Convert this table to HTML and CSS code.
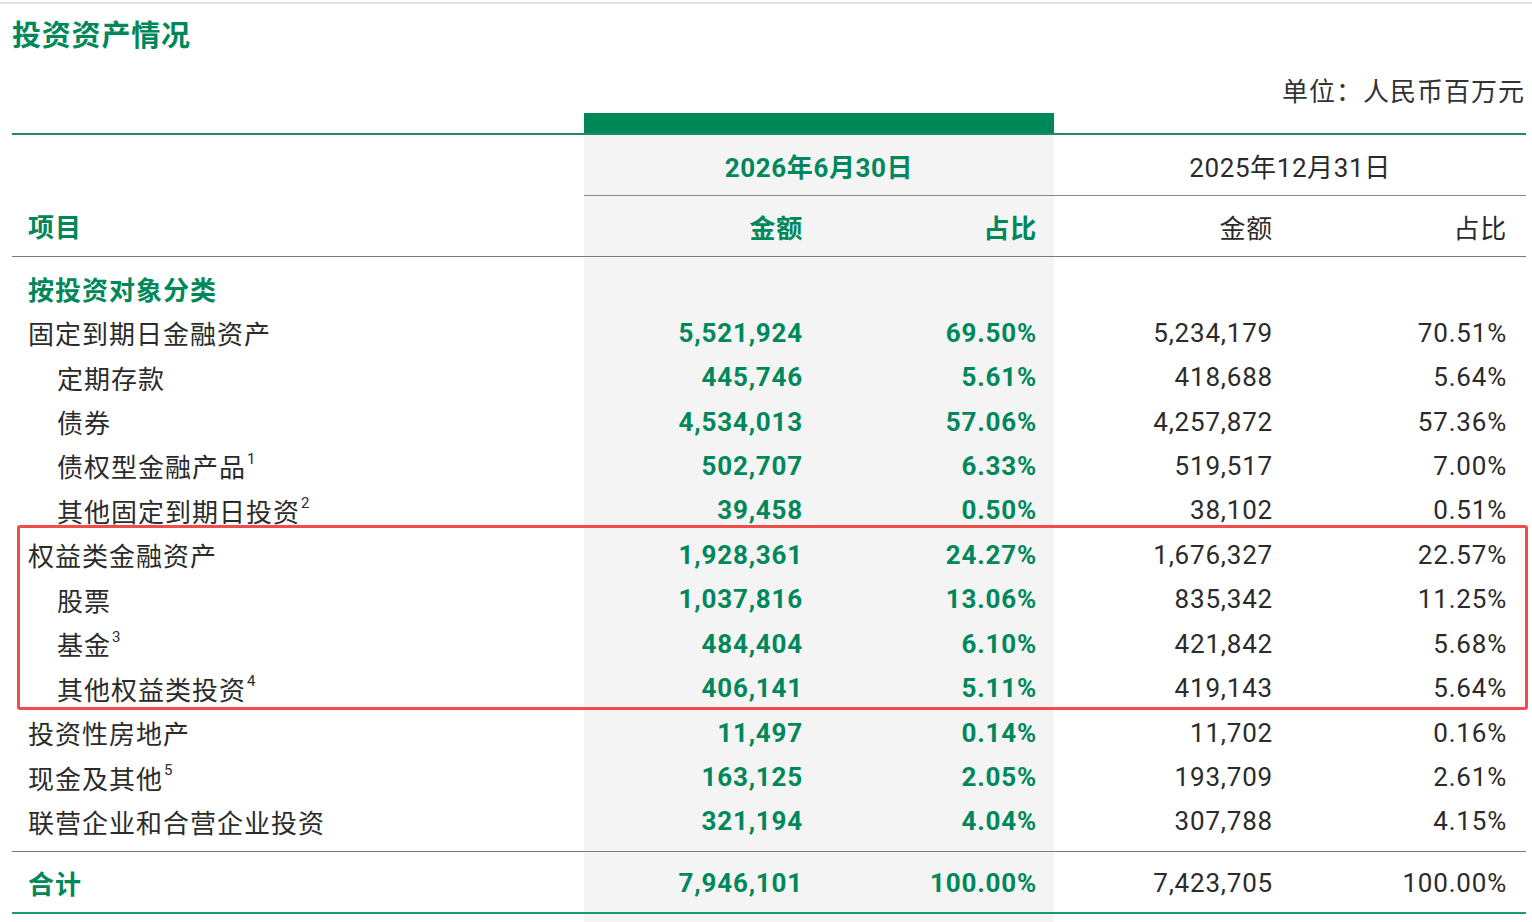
FILE: index.html
```html
<!DOCTYPE html>
<html lang="zh-CN">
<head>
<meta charset="utf-8">
<title>投资资产情况</title>
<link rel="stylesheet" href="styles.css">
</head>
<body>
<div class="page">
  <div class="topline"></div>
  <h1 class="title">投资资产情况</h1>
  <div class="unit">单位：人民币百万元</div>

  <div class="bar-row">
    <div></div>
    <div class="bar"></div>
  </div>

  <div class="table">
    <div class="row date-row">
      <div class="cell"></div>
      <div class="cell span2 date cur">2026年6月30日</div>
      <div class="cell span2 date">2025年12月31日</div>
    </div>
    <div class="row head-row">
      <div class="cell label head-label">项目</div>
      <div class="cell num c2 bold line">金额</div>
      <div class="cell num c3 bold line">占比</div>
      <div class="cell num c4 line">金额</div>
      <div class="cell num c5 line">占比</div>
    </div>

    <div class="body">
      <div class="row data">
        <div class="cell label section">按投资对象分类</div>
        <div class="cell"></div><div class="cell"></div><div class="cell"></div><div class="cell"></div>
      </div>
      <div class="row data">
        <div class="cell label">固定到期日金融资产</div>
        <div class="cell num c2 bold">5,521,924</div>
        <div class="cell num c3 bold">69.50%</div>
        <div class="cell num c4">5,234,179</div>
        <div class="cell num c5">70.51%</div>
      </div>
      <div class="row data">
        <div class="cell label sub">定期存款</div>
        <div class="cell num c2 bold">445,746</div>
        <div class="cell num c3 bold">5.61%</div>
        <div class="cell num c4">418,688</div>
        <div class="cell num c5">5.64%</div>
      </div>
      <div class="row data">
        <div class="cell label sub">债券</div>
        <div class="cell num c2 bold">4,534,013</div>
        <div class="cell num c3 bold">57.06%</div>
        <div class="cell num c4">4,257,872</div>
        <div class="cell num c5">57.36%</div>
      </div>
      <div class="row data">
        <div class="cell label sub">债权型金融产品<sup>1</sup></div>
        <div class="cell num c2 bold">502,707</div>
        <div class="cell num c3 bold">6.33%</div>
        <div class="cell num c4">519,517</div>
        <div class="cell num c5">7.00%</div>
      </div>
      <div class="row data">
        <div class="cell label sub">其他固定到期日投资<sup>2</sup></div>
        <div class="cell num c2 bold">39,458</div>
        <div class="cell num c3 bold">0.50%</div>
        <div class="cell num c4">38,102</div>
        <div class="cell num c5">0.51%</div>
      </div>
      <div class="row data">
        <div class="cell label">权益类金融资产</div>
        <div class="cell num c2 bold">1,928,361</div>
        <div class="cell num c3 bold">24.27%</div>
        <div class="cell num c4">1,676,327</div>
        <div class="cell num c5">22.57%</div>
      </div>
      <div class="row data">
        <div class="cell label sub">股票</div>
        <div class="cell num c2 bold">1,037,816</div>
        <div class="cell num c3 bold">13.06%</div>
        <div class="cell num c4">835,342</div>
        <div class="cell num c5">11.25%</div>
      </div>
      <div class="row data">
        <div class="cell label sub">基金<sup>3</sup></div>
        <div class="cell num c2 bold">484,404</div>
        <div class="cell num c3 bold">6.10%</div>
        <div class="cell num c4">421,842</div>
        <div class="cell num c5">5.68%</div>
      </div>
      <div class="row data">
        <div class="cell label sub">其他权益类投资<sup>4</sup></div>
        <div class="cell num c2 bold">406,141</div>
        <div class="cell num c3 bold">5.11%</div>
        <div class="cell num c4">419,143</div>
        <div class="cell num c5">5.64%</div>
      </div>
      <div class="row data">
        <div class="cell label">投资性房地产</div>
        <div class="cell num c2 bold">11,497</div>
        <div class="cell num c3 bold">0.14%</div>
        <div class="cell num c4">11,702</div>
        <div class="cell num c5">0.16%</div>
      </div>
      <div class="row data">
        <div class="cell label">现金及其他<sup>5</sup></div>
        <div class="cell num c2 bold">163,125</div>
        <div class="cell num c3 bold">2.05%</div>
        <div class="cell num c4">193,709</div>
        <div class="cell num c5">2.61%</div>
      </div>
      <div class="row data">
        <div class="cell label">联营企业和合营企业投资</div>
        <div class="cell num c2 bold">321,194</div>
        <div class="cell num c3 bold">4.04%</div>
        <div class="cell num c4">307,788</div>
        <div class="cell num c5">4.15%</div>
      </div>
    </div>

    <div class="row total-row">
      <div class="cell label section">合计</div>
      <div class="cell num c2 bold">7,946,101</div>
      <div class="cell num c3 bold">100.00%</div>
      <div class="cell num c4">7,423,705</div>
      <div class="cell num c5">100.00%</div>
    </div>
  </div>

  <div class="highlight"></div>
</div>
</body>
</html>
```

FILE: styles.css
```css
html, body {
  margin: 0;
  padding: 0;
  background: #ffffff;
}

body {
  font-family: Roboto, "Noto Sans CJK SC", sans-serif;
  color: #2b2b2b;
  overflow: hidden;
}

.page {
  position: relative;
  width: 1532px;
  height: 922px;
}

.topline {
  margin-top: 2px;
  height: 2px;
  background: #dde2e8;
}

.title {
  margin: 14px 0 0 12px;
  font-size: 29px;
  line-height: 36px;
  font-weight: 700;
  letter-spacing: 0.8px;
  color: #00875a;
}

.unit {
  margin-top: 21px;
  padding-right: 7px;
  text-align: right;
  font-size: 26px;
  line-height: 34px;
  letter-spacing: 1px;
  color: #333333;
}

.bar-row,
.row {
  display: grid;
  grid-template-columns: 572px 234px 236px 236px 236px;
}

.bar-row {
  margin: 4px 0 0 12px;
  width: 1514px;
  height: 20px;
}

.bar {
  grid-column: span 2;
  background: #008757;
}

.table {
  margin-left: 12px;
  width: 1514px;
  padding-bottom: 20px;
  border-top: 2px solid #1b8f62;
  background: linear-gradient(to right,
    transparent 0, transparent 572px,
    #f4f4f4 572px, #f4f4f4 1042px,
    transparent 1042px);
}

.cell {
  display: flex;
  align-items: center;
  font-size: 26px;
  letter-spacing: 1px;
  white-space: nowrap;
}

.span2 {
  grid-column: span 2;
}

.date-row {
  height: 60px;
}

.date {
  justify-content: center;
  letter-spacing: 0.6px;
}

.date.cur {
  font-weight: 700;
  color: #00875a;
}

.head-row .cell {
  height: 60px;
}

.head-row .line {
  border-top: 1px solid #8a8a8a;
}

.head-label {
  font-weight: 700;
  color: #00875a;
}

.body {
  border-top: 1px solid #7a7a7a;
  padding: 9px 0 7px;
}

.row.data {
  height: 44.45px;
}

.label {
  padding-left: 16px;
}

.label.sub {
  padding-left: 45px;
}

.section {
  font-weight: 700;
  color: #00875a;
}

.num {
  justify-content: flex-end;
  letter-spacing: 0.8px;
}

.c2 { padding-right: 15px; }
.c3 { padding-right: 17px; }
.c4 { padding-right: 17px; }
.c5 { padding-right: 19px; }

.bold {
  font-weight: 700;
  color: #00875a;
}

sup {
  font-size: 15px;
  line-height: 1;
  align-self: flex-start;
  margin-top: 8px;
  margin-left: 1px;
  letter-spacing: 0;
}

.total-row {
  height: 58px;
  border-top: 1px solid #7a7a7a;
  border-bottom: 2px solid #1b9a68;
  padding-top: 2px;
}

.highlight {
  position: absolute;
  left: 17px;
  top: 523px;
  width: 1511px;
  height: 185px;
  box-sizing: border-box;
  border: 3px solid #f04c4c;
  border-radius: 3px;
  pointer-events: none;
}
```
